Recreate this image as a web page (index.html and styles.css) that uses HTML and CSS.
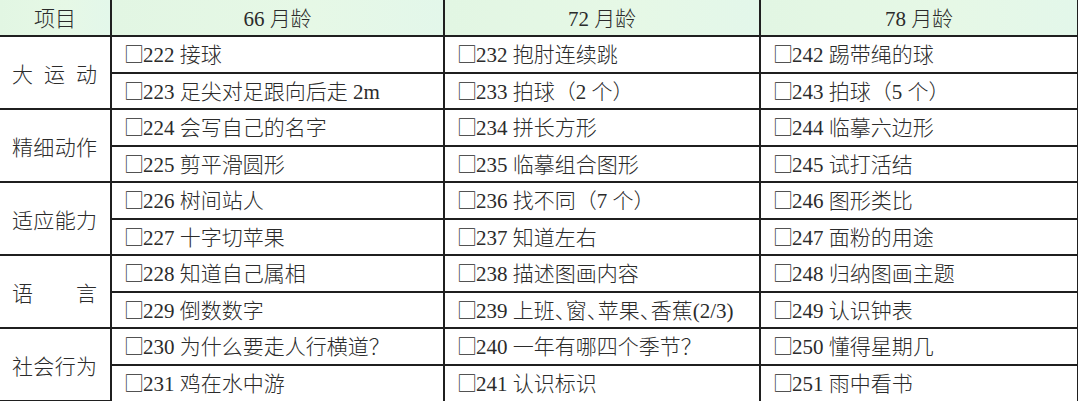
FILE: index.html
```html
<!DOCTYPE html>
<html lang="zh-CN">
<head>
<meta charset="utf-8">
<title>月龄项目表</title>
<link rel="stylesheet" href="styles.css">
</head>
<body>
<table class="grid">
  <colgroup>
    <col class="c-cat"><col class="c-a"><col class="c-b"><col class="c-c">
  </colgroup>
  <thead>
    <tr class="head">
      <th>项目</th>
      <th>66 月龄</th>
      <th>72 月龄</th>
      <th>78 月龄</th>
    </tr>
  </thead>
  <tbody>
    <tr>
      <td class="cat" rowspan="2"><span class="lbl">大运动</span></td>
      <td><span class="bx">□</span>222 接球</td>
      <td><span class="bx">□</span>232 抱肘连续跳</td>
      <td><span class="bx">□</span>242 踢带绳的球</td>
    </tr>
    <tr>
      <td><span class="bx">□</span>223 足尖对足跟向后走 2m</td>
      <td><span class="bx">□</span>233 拍球（2 个）</td>
      <td><span class="bx">□</span>243 拍球（5 个）</td>
    </tr>
    <tr>
      <td class="cat" rowspan="2"><span class="lbl">精细动作</span></td>
      <td><span class="bx">□</span>224 会写自己的名字</td>
      <td><span class="bx">□</span>234 拼长方形</td>
      <td><span class="bx">□</span>244 临摹六边形</td>
    </tr>
    <tr>
      <td><span class="bx">□</span>225 剪平滑圆形</td>
      <td><span class="bx">□</span>235 临摹组合图形</td>
      <td><span class="bx">□</span>245 试打活结</td>
    </tr>
    <tr>
      <td class="cat" rowspan="2"><span class="lbl">适应能力</span></td>
      <td><span class="bx">□</span>226 树间站人</td>
      <td><span class="bx">□</span>236 找不同（7 个）</td>
      <td><span class="bx">□</span>246 图形类比</td>
    </tr>
    <tr>
      <td><span class="bx">□</span>227 十字切苹果</td>
      <td><span class="bx">□</span>237 知道左右</td>
      <td><span class="bx">□</span>247 面粉的用途</td>
    </tr>
    <tr>
      <td class="cat" rowspan="2"><span class="lbl">语言</span></td>
      <td><span class="bx">□</span>228 知道自己属相</td>
      <td><span class="bx">□</span>238 描述图画内容</td>
      <td><span class="bx">□</span>248 归纳图画主题</td>
    </tr>
    <tr>
      <td><span class="bx">□</span>229 倒数数字</td>
      <td><span class="bx">□</span>239 上班<span class="dun">、</span>窗<span class="dun">、</span>苹果<span class="dun">、</span>香蕉(2/3)</td>
      <td><span class="bx">□</span>249 认识钟表</td>
    </tr>
    <tr>
      <td class="cat" rowspan="2"><span class="lbl">社会行为</span></td>
      <td><span class="bx">□</span>230 为什么要走人行横道？</td>
      <td><span class="bx">□</span>240 一年有哪四个季节？</td>
      <td><span class="bx">□</span>250 懂得星期几</td>
    </tr>
    <tr>
      <td><span class="bx">□</span>231 鸡在水中游</td>
      <td><span class="bx">□</span>241 认识标识</td>
      <td><span class="bx">□</span>251 雨中看书</td>
    </tr>
  </tbody>
</table>
</body>
</html>
```

FILE: styles.css
```css
html, body {
  margin: 0;
  padding: 0;
  background: #ffffff;
}

body {
  width: 1078px;
  height: 401px;
  overflow: hidden;
  font-family: "Liberation Serif", "Noto Sans CJK SC", serif;
  color: #2b2b2b;
}

.grid {
  border-collapse: collapse;
  table-layout: fixed;
  width: 1078px;
}

.c-cat { width: 111px; }
.c-a { width: 333px; }
.c-b { width: 316px; }
.c-c { width: 318px; }

.grid tr {
  height: 36.5px;
}

.grid tr.head {
  height: 36px;
}

.grid th,
.grid td {
  border: 2px solid #1f1f1f;
  font-size: 21px;
  font-weight: 300;
  line-height: 1;
  white-space: nowrap;
  padding: 2px 0 0 12px;
  text-align: left;
  vertical-align: middle;
}

.grid tr > :first-child {
  border-left: none;
}

.grid thead th {
  border-top: none;
  background: linear-gradient(90deg, #e2f6e3 0%, #e6f8e6 60%, #e3f7ea 100%);
  text-align: center;
  padding: 4px 0 0 0;
  font-weight: 300;
}

.grid tbody tr:last-child td {
  border-bottom: none;
}

.bx {
  font-family: "Noto Sans CJK SC", sans-serif;
  font-weight: 300;
  font-size: 20px;
  margin-right: -1px;
}

.dun {
  letter-spacing: -10px;
}

.grid td.cat {
  padding: 6px 0 0 12px;
  text-align: left;
}

.lbl {
  display: inline-block;
  width: 85px;
  text-align: justify;
  text-align-last: justify;
}
```
